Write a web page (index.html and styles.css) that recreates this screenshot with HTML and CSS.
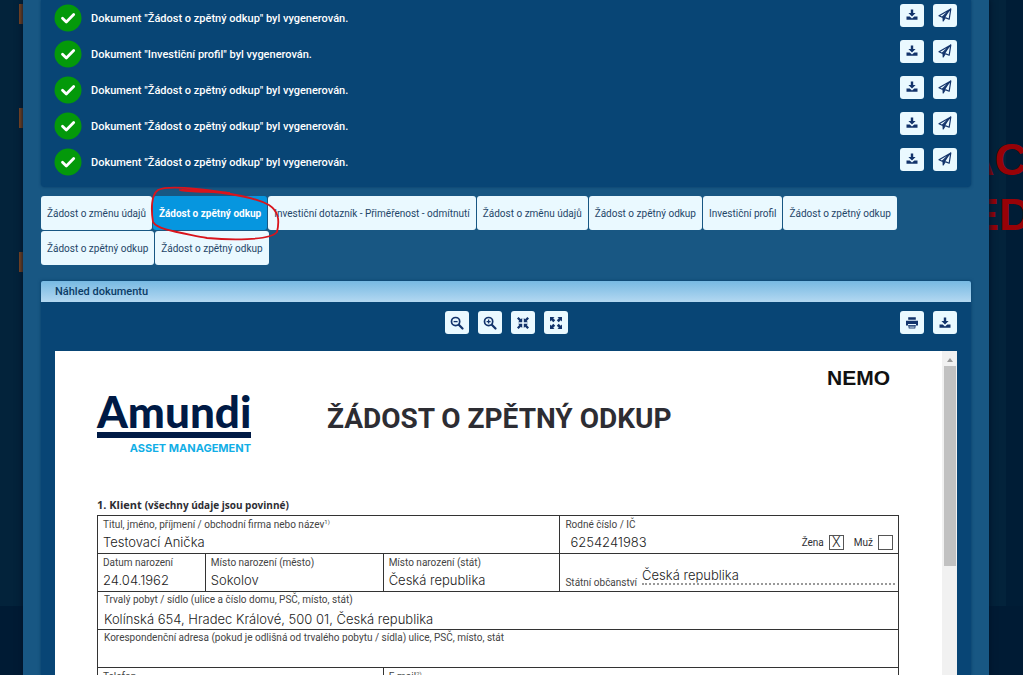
FILE: index.html
```html
<!DOCTYPE html>
<html lang="cs">
<head>
<meta charset="utf-8">
<title>Náhled dokumentu</title>
<link rel="stylesheet" href="styles.css">
</head>
<body>
<svg class="defs" aria-hidden="true">
  <symbol id="check" viewBox="0 0 28 28"><circle cx="14" cy="14" r="13.5" fill="#04990a"/><path d="M8.5 14.2l3.8 3.8 7.4-7.4" fill="none" stroke="#fff" stroke-width="2.8" stroke-linecap="round" stroke-linejoin="round"/></symbol>
  <symbol id="download" viewBox="0 0 12 12"><path d="M4.8.5h2.4v3.6h2.4L6 7.6 2.4 4.1h2.4zM.5 7.6h3.2L6 9.4l2.300-1.800h3.200v3.200H.5z" fill="#12336b"/></symbol>
  <symbol id="send" viewBox="0 0 14 14"><path d="M12.800 1L1 7.800l3.200 1.400zM12.800 1L11.200 11.200 7.200 9.600M5.200 9.600v3.400l2-3.200" fill="none" stroke="#12336b" stroke-width="1.200" stroke-linejoin="round"/><path d="M12 2L4.600 9.200 5.200 13l2-3.400z" fill="#12336b"/></symbol>
  <symbol id="minus" viewBox="0 0 14 14"><g fill="none" stroke="#12336b"><circle cx="5.600" cy="5.600" r="4.100" stroke-width="1.700"/><path d="M8.800 8.800l3.700 3.700" stroke-width="2.200" stroke-linecap="round"/><path d="M3.600 5.600h4" stroke-width="1.300"/></g></symbol>
  <symbol id="plus" viewBox="0 0 14 14"><g fill="none" stroke="#12336b"><circle cx="5.600" cy="5.600" r="4.100" stroke-width="1.700"/><path d="M8.800 8.800l3.700 3.700" stroke-width="2.200" stroke-linecap="round"/><path d="M3.600 5.600h4M5.600 3.600v4" stroke-width="1.300"/></g></symbol>
  <symbol id="shrink" viewBox="0 0 14 14"><path d="M6.200 6.200H2L3.300 4.900 1 2.600 2.600 1l2.300 2.300L6.200 2zM7.800 6.200V2l1.300 1.300L11.400 1 13 2.600l-2.300 2.300L12 6.200zM6.200 7.800V12l-1.300-1.300L2.600 13 1 11.400l2.300-2.300L2 7.800zM7.800 7.800H12l-1.300 1.300 2.300 2.300-1.600 1.600-2.300-2.300L7.800 12z" fill="#12336b"/></symbol>
  <symbol id="expand" viewBox="0 0 14 14"><path d="M1 1h4.500L4.200 2.300l2 2-1.900 1.900-2-2L1 5.500zM13 1v4.500l-1.300-1.300-2 2-1.900-1.900 2-2L8.500 1zM1 13V8.500l1.300 1.300 2-2 1.900 1.900-2 2L5.500 13zM13 13H8.500l1.300-1.300-2-2 1.900-1.900 2 2L13 8.500z" fill="#12336b"/></symbol>
  <symbol id="print" viewBox="0 0 14 14"><path d="M3.200 1.200h7.600v2.600H3.200zM1 4.800h12v4.800h-2V8H3v1.600H1zM3.200 9h7.600l-.6 3.600H3.800z" fill="#12336b"/><path d="M4.200 10.200h5.600M4.400 11.600h5.200" stroke="#eaf9ff" stroke-width=".6"/></symbol>
</svg>

<div class="backdrop" aria-hidden="true">
  <i class="chip chip-a"></i><i class="chip chip-b"></i><i class="chip chip-c"></i>
  <div class="banner"><span class="banner-top">AC</span><span class="banner-bottom">ED</span></div>
</div>

<main class="dialog">
  <ul class="panel results">
    <li class="result"><svg class="check"><use href="#check"/></svg><span class="message">Dokument "Žádost o zpětný odkup" byl vygenerován.</span><button class="tool" aria-label="Stáhnout"><svg class="small"><use href="#download"/></svg></button><button class="tool" aria-label="Odeslat"><svg class="icon"><use href="#send"/></svg></button></li>
    <li class="result"><svg class="check"><use href="#check"/></svg><span class="message">Dokument "Investiční profil" byl vygenerován.</span><button class="tool" aria-label="Stáhnout"><svg class="small"><use href="#download"/></svg></button><button class="tool" aria-label="Odeslat"><svg class="icon"><use href="#send"/></svg></button></li>
    <li class="result"><svg class="check"><use href="#check"/></svg><span class="message">Dokument "Žádost o zpětný odkup" byl vygenerován.</span><button class="tool" aria-label="Stáhnout"><svg class="small"><use href="#download"/></svg></button><button class="tool" aria-label="Odeslat"><svg class="icon"><use href="#send"/></svg></button></li>
    <li class="result"><svg class="check"><use href="#check"/></svg><span class="message">Dokument "Žádost o zpětný odkup" byl vygenerován.</span><button class="tool" aria-label="Stáhnout"><svg class="small"><use href="#download"/></svg></button><button class="tool" aria-label="Odeslat"><svg class="icon"><use href="#send"/></svg></button></li>
    <li class="result"><svg class="check"><use href="#check"/></svg><span class="message">Dokument "Žádost o zpětný odkup" byl vygenerován.</span><button class="tool" aria-label="Stáhnout"><svg class="small"><use href="#download"/></svg></button><button class="tool" aria-label="Odeslat"><svg class="icon"><use href="#send"/></svg></button></li>
  </ul>

  <nav class="tabs">
    <button class="tab">Žádost o změnu údajů</button>
    <button class="tab active">Žádost o zpětný odkup</button>
    <button class="tab">Investiční dotazník - Přiměřenost - odmítnutí</button>
    <button class="tab">Žádost o změnu údajů</button>
    <button class="tab">Žádost o zpětný odkup</button>
    <button class="tab">Investiční profil</button>
    <button class="tab">Žádost o zpětný odkup</button>
    <button class="tab">Žádost o zpětný odkup</button>
    <button class="tab">Žádost o zpětný odkup</button>
    <svg class="marking" viewBox="0 0 132 56" aria-hidden="true"><path d="M30 5C38 8 66 6 80 8C62 6 20-1 8 5C1 10 1 25 3 37C8 45 27 47 57 53C78 55 120 56 127 47C130 34 128 26 119 20C102 11 68 6 32 5" fill="none" stroke="#d9141c" stroke-width="1.8" stroke-linecap="round"/></svg>
  </nav>

  <section class="panel preview">
    <h2 class="panel-title">Náhled dokumentu</h2>
    <div class="toolbar">
      <div class="zoom">
        <button class="tool" aria-label="Oddálit"><svg class="icon"><use href="#minus"/></svg></button>
        <button class="tool" aria-label="Přiblížit"><svg class="icon"><use href="#plus"/></svg></button>
        <button class="tool" aria-label="Zmenšit"><svg class="icon"><use href="#shrink"/></svg></button>
        <button class="tool" aria-label="Zvětšit"><svg class="icon"><use href="#expand"/></svg></button>
      </div>
      <div class="actions">
        <button class="tool" aria-label="Tisk"><svg class="icon"><use href="#print"/></svg></button>
        <button class="tool" aria-label="Stáhnout"><svg class="small"><use href="#download"/></svg></button>
      </div>
    </div>
    <div class="viewer">
      <article class="sheet">
        <p class="code">NEMO</p>
        <header class="sheet-head">
          <div class="logo"><span class="logo-name">Amundi</span><span class="logo-sub">ASSET MANAGEMENT</span></div>
          <h1 class="title">ŽÁDOST O ZPĚTNÝ ODKUP</h1>
        </header>
        <h3 class="section">1. Klient <small>(všechny údaje jsou povinné)</small></h3>
        <div class="form">
          <div class="line line-id">
            <div class="cell"><span class="label">Titul, jméno, příjmení / obchodní firma nebo název<sup>1)</sup></span><span class="value">Testovací Anička</span></div>
            <div class="cell"><span class="label">Rodné číslo / IČ</span>
              <div class="with-sex"><span class="value number">6254241983</span>
                <label class="sex">Žena <input type="checkbox" class="box" checked></label>
                <label class="sex">Muž <input type="checkbox" class="box"></label></div></div>
          </div>
          <div class="line line-birth">
            <div class="cell"><span class="label">Datum narození</span><span class="value">24.04.1962</span></div>
            <div class="cell"><span class="label">Místo narození (město)</span><span class="value">Sokolov</span></div>
            <div class="cell"><span class="label">Místo narození (stát)</span><span class="value">Česká republika</span></div>
            <div class="cell citizen"><span class="label">Státní občanství</span><span class="value dotted">Česká republika</span></div>
          </div>
          <div class="line"><div class="cell address"><span class="label">Trvalý pobyt / sídlo (ulice a číslo domu, PSČ, místo, stát)</span><span class="value">Kolínská 654, Hradec Králové, 500 01, Česká republika</span></div></div>
          <div class="line"><div class="cell address"><span class="label">Korespondenční adresa (pokud je odlišná od trvalého pobytu / sídla) ulice, PSČ, místo, stát</span></div></div>
          <div class="line line-contact">
            <div class="cell"><span class="label">Telefon</span></div>
            <div class="cell"><span class="label">E-mail<sup>2)</sup></span></div>
          </div>
        </div>
      </article>
      <div class="scrollbar" aria-hidden="true"><i class="arrow"></i><i class="thumb"></i></div>
    </div>
  </section>
</main>
</body>
</html>
```
FILE: styles.css
```css
* { box-sizing: border-box; }
html, body { height: 100%; }
body {
  margin: 0;
  padding: 0 34px 0 23px;
  overflow: hidden;
  position: relative;
  background: linear-gradient(#03233b 606px, #001b34 606px);
  font-family: "Roboto", "Liberation Sans", sans-serif;
  font-size: 11px;
}
button { font: inherit; border: 0; padding: 0; }
.defs { position: absolute; width: 0; height: 0; }

.backdrop { position: absolute; inset: 0; overflow: hidden; }
.chip { position: absolute; left: 19px; width: 8px; height: 20px; background: #8a4a20; }
.chip-a { top: 4px; }
.chip-b { top: 108px; }
.chip-c { top: 252px; }
.banner {
  position: absolute; top: 0; right: 0; width: 61px; height: 606px;
  background: linear-gradient(90deg, #03233b 44px, #001d36 44px);
  color: #980207;
  font: bold 45px/54px "Liberation Sans", sans-serif;
}
.banner-top, .banner-bottom { position: absolute; }
.banner-top { top: 133px; left: 0; }
.banner-bottom { top: 188px; left: 7px; }

.dialog {
  position: relative;
  height: 100%;
  padding: 0 18px 0;
  display: flex;
  flex-direction: column;
  background: #185783;
  box-shadow: 0 0 6px 1px #00142a;
}
.panel { background: #084575; box-shadow: 0 0 3px #063b66; }
.results { margin: 0 0 9px; padding: 0 14px 7px 13px; list-style: none; border-radius: 0 0 4px 4px; }
.result { display: flex; align-items: center; height: 36px; gap: 9px; color: #fff; }
.check { width: 28px; height: 28px; }
.message { flex: 1; font-weight: 500; }
.tool {
  width: 24px; height: 23px;
  display: flex; align-items: center; justify-content: center;
  background: #eaf9ff;
  border-radius: 3px;
}
.result .tool { margin-bottom: 6px; }
.icon { width: 14px; height: 14px; }
.small { width: 12px; height: 12px; }

.tabs { position: relative; display: flex; flex-wrap: wrap; gap: 1px; padding-right: 40px; margin-bottom: 16px; }
.tab { height: 34px; padding: 0 6px; font-size: 10px; background: #eaf9ff; color: #1f4668; border-radius: 3px; }
.tab.active { background: #0696df; color: #fff; font-weight: bold; }
.marking { position: absolute; left: 109px; top: -11px; width: 132px; height: 56px; }

.preview { flex: 1; min-height: 0; display: flex; flex-direction: column; }
.panel-title {
  margin: 0; padding: 0 14px;
  font-size: 11px; line-height: 21px; font-weight: 500;
  color: #0b3c66;
  background: linear-gradient(#77b9e2, #b3d8f1);
  border-radius: 2px 2px 0 0;
}
.toolbar { position: relative; display: flex; justify-content: center; padding: 9px 14px 17px; }
.zoom { display: flex; gap: 9px; }
.actions { position: absolute; right: 14px; display: flex; gap: 9px; }

.viewer { flex: 1; min-height: 0; display: flex; margin: 0 14px; background: #fff; overflow: hidden; }
.sheet { flex: 1; padding: 16px 43px 0 42px; color: #2d2d33; }
.code { margin: 0; padding-right: 9px; text-align: right; font: bold 21px/22px "Liberation Sans", sans-serif; color: #111; }
.sheet-head { display: flex; align-items: flex-start; gap: 76px; height: 106px; }
.logo { width: 154px; display: flex; flex-direction: column; color: #001a45; }
.logo-name { font: 900 44px/44px "Lato", sans-serif; height: 49px; border-bottom: 6px solid #001a45; }
.logo-sub { font: bold 11px/20px "Inter", sans-serif; color: #12aee6; text-align: right; white-space: nowrap; }
.title { margin: 13px 0 0; font-size: 28px; line-height: 34px; font-weight: bold; white-space: nowrap; }
.section { margin: 0; font: bold 11px/20px "Open Sans", sans-serif; }
.section small { font: bold 10px/20px "Open Sans", sans-serif; }

.form { border: 1px solid #333; border-bottom: 0; font-family: "Roboto", sans-serif; }
.line { display: grid; border-bottom: 1px solid #333; height: 38px; }
.line-id { grid-template-columns: 462fr 339fr; }
.line-birth { grid-template-columns: 107fr 178fr 177fr 339fr; }
.line-contact { grid-template-columns: 285fr 516fr; }
.cell { padding: 1px 5px; display: flex; flex-direction: column; white-space: nowrap; min-width: 0; }
.cell + .cell { border-left: 1px solid #333; }
.address { padding: 0 6px; justify-content: space-between; }
.label { font-size: 10px; line-height: 15px; color: #444; }
.label sup { font-size: 6px; line-height: 0; }
.value { font: 300 13px/20px "Inter", sans-serif; color: #222; }
.with-sex { display: flex; align-items: center; gap: 10px; }
.number { flex: 1; padding-left: 5px; }
.sex { display: flex; align-items: center; gap: 5px; font-size: 10px; }
.box {
  appearance: none; margin: 0; width: 15px; height: 15px;
  border: 1px solid #555;
  display: grid; place-items: center;
}
.box:checked::after { content: "X"; font: 300 14px/13px "Roboto", sans-serif; color: #222; }
.citizen { flex-direction: row; align-items: flex-end; gap: 5px; padding: 0 3px 1px 5px; }
.dotted { flex: 1; margin-bottom: 5px; line-height: 16px; border-bottom: 2px dotted #999; }

.scrollbar { width: 15px; display: flex; flex-direction: column; align-items: center; background: #f1f1f1; }
.arrow { margin: 6px 0 4px; border: 3px solid transparent; border-top: 0; border-bottom: 4px solid #999; height: 5px; }
.thumb { width: 12px; height: 200px; background: #c1c1c1; }
```
